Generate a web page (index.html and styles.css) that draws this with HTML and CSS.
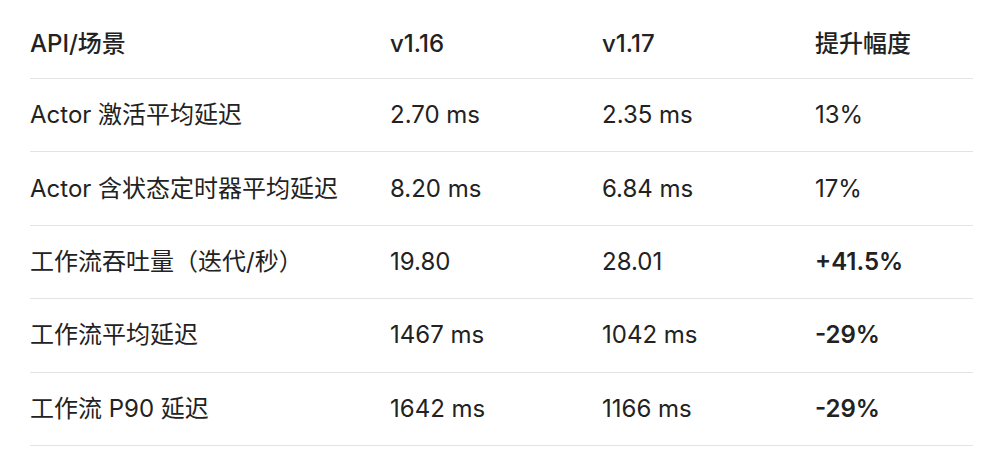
FILE: index.html
```html
<!DOCTYPE html>
<html lang="zh-CN">
<head>
<meta charset="utf-8">
<link rel="stylesheet" href="styles.css">
</head>
<body>
<table class="perf">
  <colgroup>
    <col class="c1"><col class="c2"><col class="c3"><col class="c4">
  </colgroup>
  <thead>
    <tr><th>API/场景</th><th>v1.16</th><th>v1.17</th><th>提升幅度</th></tr>
  </thead>
  <tbody>
    <tr><td>Actor 激活平均延迟</td><td>2.70 ms</td><td>2.35 ms</td><td>13%</td></tr>
    <tr><td>Actor 含状态定时器平均延迟</td><td>8.20 ms</td><td>6.84 ms</td><td>17%</td></tr>
    <tr><td>工作流吞吐量（迭代/秒）</td><td>19.80</td><td>28.01</td><td><strong>+41.5%</strong></td></tr>
    <tr><td>工作流平均延迟</td><td>1467 ms</td><td>1042 ms</td><td><strong>-29%</strong></td></tr>
    <tr><td>工作流 P90 延迟</td><td>1642 ms</td><td>1166 ms</td><td><strong>-29%</strong></td></tr>
  </tbody>
</table>
</body>
</html>
```
FILE: styles.css
```css
html, body {
  margin: 0;
  padding: 0;
  background: #ffffff;
}
body {
  font-family: Inter, "Noto Sans CJK SC", sans-serif;
  color: #222222;
  font-size: 24px;
}
.perf {
  margin-left: 30px;
  width: 943px;
  border-collapse: collapse;
  table-layout: fixed;
}
.c1 { width: 360px; }
.c2 { width: 212px; }
.c3 { width: 213px; }
.c4 { width: 158px; }
.perf th, .perf td {
  text-align: left;
  padding: 0;
  line-height: 34px;
  border-bottom: 1px solid #e3e3e3;
  white-space: nowrap;
}
.perf th {
  font-weight: 500;
  padding-top: 27px;
  padding-bottom: 17px;
}
.perf td {
  padding-top: 19.2px;
  padding-bottom: 19.2px;
}
.perf strong {
  font-weight: 600;
}
```
